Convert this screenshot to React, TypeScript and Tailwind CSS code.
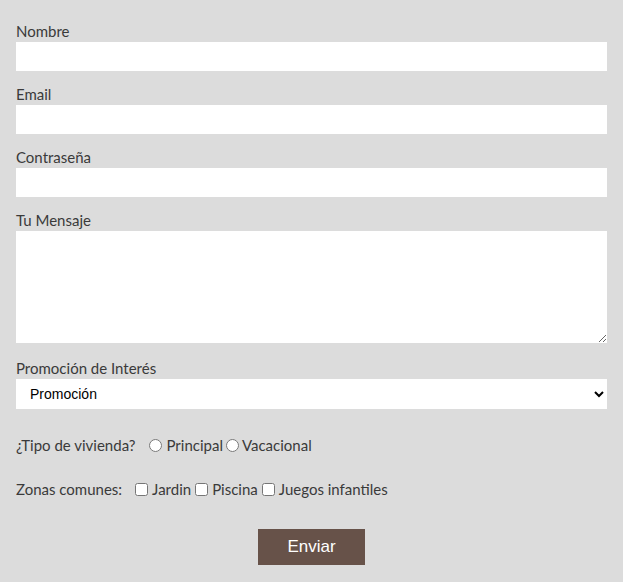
import React from 'react';

const labelCls = 'block text-[15px] leading-[21px] text-[#3a3a3a]';
const inputCls = 'block w-full h-[29px] bg-white border-0 outline-none px-2 text-[14px]';

export default function App() {
  return (
    <div
      className="min-h-[582px] w-full bg-[#dcdcdc] px-4 pt-[21px]"
      style={{ fontFamily: 'Lato, "Open Sans", sans-serif' }}
    >
      <form onSubmit={(e) => e.preventDefault()}>
        <label className={labelCls}>Nombre</label>
        <input type="text" className={inputCls} />

        <label className={`${labelCls} mt-[13px]`}>Email</label>
        <input type="email" className={inputCls} />

        <label className={`${labelCls} mt-[13px]`}>Contraseña</label>
        <input type="password" className={inputCls} />

        <label className={`${labelCls} mt-[13px]`}>Tu Mensaje</label>
        <textarea className="block h-[112px] w-full border-0 bg-white p-2 text-[14px] outline-none" />

        <label className={`${labelCls} mt-[15px]`}>Promoción de Interés</label>
        <select
          className="block h-[30px] w-full border-0 bg-white pl-[10px] text-[14px] text-black outline-none"
          style={{ fontFamily: '"Liberation Sans", Arial, sans-serif' }}
          defaultValue="p"
        >
          <option value="p">Promoción</option>
        </select>

        <div className="mt-[25px] flex h-[22px] items-center text-[15px] text-[#3a3a3a]">
          <span>¿Tipo de vivienda?</span>
          <label className="ml-[14px] flex items-center">
            <input type="radio" name="tipo" className="m-0 h-[13px] w-[13px]" />
            <span className="ml-[4px]">Principal</span>
          </label>
          <label className="ml-[3px] flex items-center">
            <input type="radio" name="tipo" className="m-0 h-[13px] w-[13px]" />
            <span className="ml-[3px]">Vacacional</span>
          </label>
        </div>

        <div className="mt-[22px] flex h-[22px] items-center text-[15px] text-[#3a3a3a]">
          <span>Zonas comunes:</span>
          <label className="ml-[13px] flex items-center">
            <input type="checkbox" className="m-0 h-[13px] w-[13px]" />
            <span className="ml-[4px]">Jardin</span>
          </label>
          <label className="ml-[4px] flex items-center">
            <input type="checkbox" className="m-0 h-[13px] w-[13px]" />
            <span className="ml-[4px]">Piscina</span>
          </label>
          <label className="ml-[4px] flex items-center">
            <input type="checkbox" className="m-0 h-[13px] w-[13px]" />
            <span className="ml-[4px]">Juegos infantiles</span>
          </label>
        </div>

        <div className="mt-[29px] flex justify-center">
          <button
            type="submit"
            className="h-[36px] w-[107px] bg-[#675249] text-[17px] text-white"
            style={{ fontFamily: '"Liberation Sans", Arial, sans-serif' }}
          >
            Enviar
          </button>
        </div>
      </form>
    </div>
  );
}
